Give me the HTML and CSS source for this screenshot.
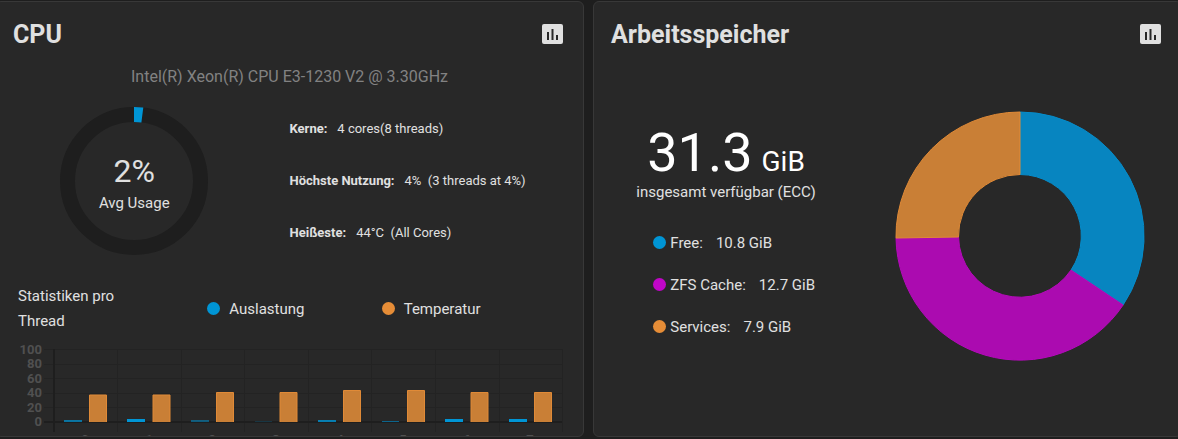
FILE: index.html
```html
<!DOCTYPE html>
<html lang="de">
<head>
<meta charset="utf-8">
<meta name="viewport" content="width=device-width, initial-scale=1">
<title>Dashboard</title>
<link rel="stylesheet" href="styles.css">
</head>
<body>
<main class="dashboard">
  <section class="card">
    <header class="card-header">
      <h2 class="card-title">CPU</h2>
      <button class="report-button" type="button" aria-label="CPU-Berichte">
        <svg class="report-icon" viewBox="0 0 21 20" aria-hidden="true">
          <rect width="21" height="20" rx="2" fill="#e0e0e0"/>
          <path d="M5 8h2v8H5zM9.500 5h2v11h-2zM14 11h2v5h-2z" fill="#282828"/>
        </svg>
      </button>
    </header>
    <p class="cpu-model">Intel(R) Xeon(R) CPU E3-1230 V2 @ 3.30GHz</p>
    <div class="cpu-body">
      <div class="gauge">
        <svg class="gauge-ring" viewBox="-74 -74 148 148" aria-hidden="true">
          <circle r="66.500" fill="none" stroke="#1e1e1e" stroke-width="15"/>
          <path d="M0-74A74 74 0 0 1 9.300-73.400L7.400-58.500A59 59 0 0 0 0-59Z" fill="#0095d5"/>
        </svg>
        <div class="gauge-label">
          <span class="gauge-value">2%</span>
          <span>Avg Usage</span>
        </div>
      </div>
      <dl class="details">
        <div class="detail"><dt>Kerne:</dt><dd>4 cores(8 threads)</dd></div>
        <div class="detail"><dt>Höchste Nutzung:</dt><dd>4% &nbsp;(3 threads at 4%)</dd></div>
        <div class="detail"><dt>Heißeste:</dt><dd>44°C &nbsp;(All Cores)</dd></div>
      </dl>
    </div>
    <div class="legend">
      <p class="legend-title">Statistiken pro Thread</p>
      <span class="legend-item"><i class="dot blue"></i>Auslastung</span>
      <span class="legend-item"><i class="dot orange"></i>Temperatur</span>
    </div>
    <svg class="thread-chart" viewBox="-4 343 587 93" role="img" aria-label="Statistiken pro Thread">
      <path class="grid-line" d="M44 349.500H562M44 364.500H562M44 378.500H562M44 393.500H562M44 407.500H562M117.500 349V432M181.500 349V432M244.500 349V432M308.500 349V432M371.500 349V432M435.500 349V432M499.500 349V432M562.500 349V432"/>
      <path class="axis-line" d="M44 422H562M54 349V432"/>
      <g class="scale">
        <text x="42" y="354">100</text>
        <text x="42" y="368">80</text>
        <text x="42" y="383">60</text>
        <text x="42" y="397">40</text>
        <text x="42" y="412">20</text>
        <text x="42" y="426">0</text>
      </g>
      <g fill="#0095d5">
        <rect x="64" y="420" width="18" height="2" opacity=".7"/>
        <rect x="127" y="419" width="18" height="3"/>
        <rect x="191" y="420" width="18" height="2" opacity=".5"/>
        <rect x="255" y="421" width="17" height="1" opacity=".2"/>
        <rect x="318" y="420" width="18" height="2" opacity=".8"/>
        <rect x="382" y="421" width="17" height="1" opacity=".6"/>
        <rect x="445" y="419" width="18" height="3"/>
        <rect x="509" y="419" width="18" height="3"/>
      </g>
      <g class="temperature">
        <path d="M89.500 422V395H106.500V422"/>
        <path d="M153 422V395H170V422"/>
        <path d="M216.500 422V392.500H233.500V422"/>
        <path d="M280 422V392.500H297V422"/>
        <path d="M343.500 422V390.500H360.500V422"/>
        <path d="M407.500 422V390.500H424.500V422"/>
        <path d="M471 422V392.500H488V422"/>
        <path d="M534.500 422V392.500H551.500V422"/>
      </g>
      <g class="threads">
        <text x="85" y="444">0</text>
        <text x="149" y="444">1</text>
        <text x="212" y="444">2</text>
        <text x="276" y="444">3</text>
        <text x="340" y="444">4</text>
        <text x="403" y="444">5</text>
        <text x="467" y="444">6</text>
        <text x="530" y="444">7</text>
      </g>
    </svg>
  </section>

  <section class="card">
    <header class="card-header">
      <h2 class="card-title">Arbeitsspeicher</h2>
      <button class="report-button" type="button" aria-label="Speicherberichte">
        <svg class="report-icon" viewBox="0 0 21 20" aria-hidden="true">
          <rect width="21" height="20" rx="2" fill="#e0e0e0"/>
          <path d="M5 8h2v8H5zM9.500 5h2v11h-2zM14 11h2v5h-2z" fill="#282828"/>
        </svg>
      </button>
    </header>
    <div class="memory-body">
      <div class="memory-summary">
        <p class="memory-total">31.3<span class="memory-unit">GiB</span></p>
        <p class="memory-caption">insgesamt verfügbar (ECC)</p>
        <ul class="memory-list">
          <li class="memory-item"><i class="dot blue"></i>Free:<span class="amount">10.8 GiB</span></li>
          <li class="memory-item"><i class="dot magenta"></i>ZFS Cache:<span class="amount">12.7 GiB</span></li>
          <li class="memory-item"><i class="dot orange"></i>Services:<span class="amount">7.9 GiB</span></li>
        </ul>
      </div>
      <svg class="donut" viewBox="-125 -125 250 250" role="img" aria-label="Speicherbelegung">
        <path d="M0-124A124 124 0 0 1 103.100 69L51 34.100A61.500 61.500 0 0 0 0-61.500Z" fill="#0785c0" stroke="#068cca"/>
        <path d="M103.100 69A124 124 0 0 1-124 2L-61.500 1A61.500 61.500 0 0 0 51 34.100Z" fill="#ab0bb0" stroke="#b50abb"/>
        <path d="M-124 2A124 124 0 0 1 0-124V-61.500A61.500 61.500 0 0 0-61.500 1Z" fill="#c97f36" stroke="#e08a37"/>
      </svg>
    </div>
  </section>
</main>
</body>
</html>
```
FILE: styles.css
```css
* {
  box-sizing: border-box;
}

body {
  margin: 0;
  overflow-x: hidden;
  background: #1e1e1e;
  color: #e0e0e0;
  font-family: Roboto, sans-serif;
  font-size: 15px;
  line-height: 20px;
}

p, h2, ul, dl, dd {
  margin: 0;
  padding: 0;
}

.dashboard {
  display: grid;
  grid-template-columns: 1fr 1fr;
  gap: 9px;
  margin: 0 -4px 0 -5px;
  padding: 1px 0 2px;
}

.card {
  overflow: hidden;
  background: #282828;
  border: 1px solid #383838;
  border-radius: 6px;
}

.card-header {
  display: flex;
  align-items: center;
  justify-content: space-between;
  height: 64px;
  padding: 0 20px 0 17px;
}

.card-title {
  padding-top: 2px;
  font-size: 25px;
  font-weight: 700;
  line-height: 32px;
}

.report-button {
  display: flex;
  padding: 0;
  border: 0;
  background: none;
  cursor: pointer;
}

.report-icon {
  width: 21px;
  height: 20px;
}

.cpu-model {
  color: #828282;
  font-size: 16px;
  line-height: 22px;
  text-align: center;
}

.cpu-body {
  display: grid;
  grid-template-columns: 1fr 1fr;
  align-items: center;
  margin-top: 19px;
}

.gauge {
  display: grid;
  place-items: center;
  padding-right: 17px;
}

.gauge-ring {
  grid-area: 1 / 1;
  width: 148px;
  height: 148px;
}

.gauge-label {
  grid-area: 1 / 1;
  display: flex;
  flex-direction: column;
  align-items: center;
  gap: 2px;
  padding-top: 2px;
}

.gauge-value {
  font-size: 32px;
  line-height: 40px;
}

.details {
  display: grid;
  gap: 32px;
  font-size: 13px;
}

.detail {
  display: flex;
  gap: 10px;
}

.detail dt {
  font-weight: 700;
}

.legend {
  display: grid;
  grid-template-columns: 189fr 174fr 181fr;
  align-items: center;
  margin: 29px 20px 9px 22px;
}

.legend-title {
  padding-right: 72px;
  line-height: 25px;
}

.legend-item {
  display: flex;
  align-items: center;
  gap: 9px;
}

.dot {
  flex: none;
  width: 13px;
  height: 13px;
  margin-bottom: 2px;
  border-radius: 50%;
}

.blue {
  background: #0095d5;
}

.orange {
  background: #e68d37;
}

.magenta {
  background: #c006c7;
}

.thread-chart {
  display: block;
  width: 100%;
}

.grid-line {
  fill: none;
  stroke: #232323;
}

.axis-line {
  fill: none;
  stroke: #1e1e1e;
  stroke-width: 2;
}

.scale,
.threads {
  fill: #505050;
  font: 700 13px Roboto, sans-serif;
}

.scale {
  text-anchor: end;
}

.threads {
  text-anchor: middle;
}

.temperature {
  fill: #c97f36;
  stroke: #e08a37;
}

.memory-body {
  display: grid;
  grid-template-columns: 9fr 11fr;
  justify-items: center;
  align-items: start;
  padding-top: 45px;
}

.memory-summary {
  padding-top: 13px;
}

.memory-total {
  display: flex;
  align-items: baseline;
  justify-content: center;
  gap: 9px;
  color: #ffffff;
  font-size: 54px;
  line-height: 58px;
}

.memory-unit {
  font-size: 28px;
  line-height: 32px;
}

.memory-caption {
  text-align: center;
}

.memory-list {
  display: grid;
  gap: 22px;
  margin-top: 31px;
  padding-left: 17px;
  list-style: none;
}

.memory-item {
  display: flex;
  align-items: center;
  gap: 4px;
}

.amount {
  margin-left: 9px;
}

.donut {
  width: 250px;
  max-width: 100%;
}
```
